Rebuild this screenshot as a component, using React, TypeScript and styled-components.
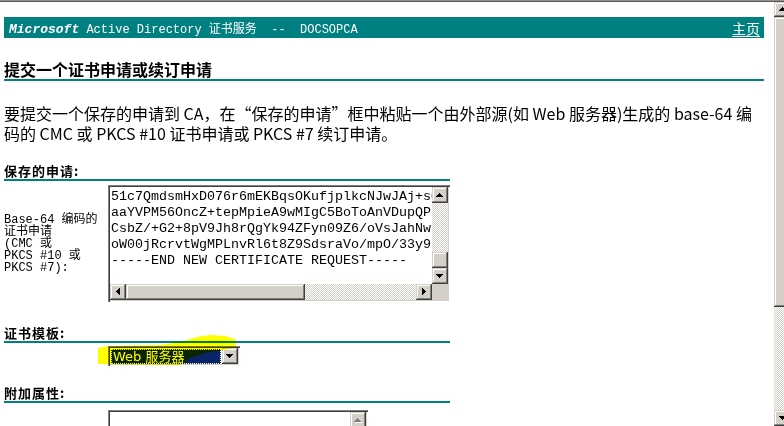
import React from "react";
import styled, { createGlobalStyle, css } from "styled-components";

const TEAL = "#008080";
const FACE = "#d4d0c8";
const CJK = `"Noto Sans CJK SC", sans-serif`;
const MONO = `"Liberation Mono", "Noto Sans CJK SC", monospace`;

const GlobalStyle = createGlobalStyle`
  html, body { margin: 0; padding: 0; background: #fff; overflow: hidden; }
  #root { width: 784px; height: 426px; }
`;

const bevel = css`
  background: ${FACE};
  box-shadow: inset -1px -1px #404040, inset 1px 1px ${FACE},
    inset -2px -2px #808080, inset 2px 2px #fff;
`;

const sunken = css`
  box-sizing: border-box;
  padding: 2px;
  background: #fff;
  box-shadow: inset 1px 1px #808080, inset 2px 2px #404040,
    inset -1px -1px #fff, inset -2px -2px ${FACE};
`;

const Frame = styled.div`
  width: 784px;
  height: 426px;
  display: flex;
  flex-direction: column;
  overflow: hidden;
`;

const TopEdge = styled.div`
  flex: none;
  height: 0;
  border-top: 1px solid #909090;
  border-bottom: 1px solid #5c5c5c;
`;

const Viewport = styled.div`
  flex: 1;
  min-height: 0;
  display: flex;
`;

const Page = styled.div`
  flex: 1;
  min-width: 0;
  padding: 15px 10px 0 4px;
  overflow: hidden;
`;

const WinScroll = styled.div`
  flex: none;
  width: 10px;
  overflow: hidden;
  display: flex;
  flex-direction: column;
  align-items: flex-start;
`;

const ScrollButton = styled.div<{ $w?: number; $h?: number }>`
  ${bevel};
  flex: none;
  box-sizing: border-box;
  width: ${(p) => p.$w ?? 16}px;
  height: ${(p) => p.$h ?? 16}px;
  display: flex;
  align-items: center;
  justify-content: center;
`;

const Thumb = styled.div<{ $w?: number; $h?: number }>`
  ${bevel};
  flex: none;
  width: ${(p) => (p.$w ? `${p.$w}px` : "16px")};
  height: ${(p) => (p.$h ? `${p.$h}px` : "16px")};
`;

const Track = styled.div<{ $w?: number }>`
  flex: 1;
  ${(p) => (p.$w ? `width: ${p.$w}px;` : "")}
  background: repeating-conic-gradient(#fff 0 25%, ${FACE} 0 50%) 0 0 / 2px 2px;
`;

const Banner = styled.div`
  display: flex;
  align-items: center;
  justify-content: space-between;
  height: 21px;
  background: ${TEAL};
  padding: 0 4px 0 5px;
  color: #fff;
`;

const BannerTitle = styled.span`
  font-family: ${MONO};
  font-size: 12px;
  white-space: pre;
`;

const Brand = styled.span`
  font-family: "Liberation Mono", monospace;
  font-size: 13px;
  font-weight: 700;
  font-style: italic;
`;

const HomeLink = styled.a`
  font-family: ${CJK};
  font-size: 14px;
  color: #fff;
  text-decoration: underline;
  text-underline-offset: 2px;
`;

const Title = styled.h1`
  margin: 21px 0 0;
  font-family: ${CJK};
  font-size: 16px;
  font-weight: 700;
  line-height: 20px;
  color: #000;
  border-bottom: 2px solid ${TEAL};
`;

const Intro = styled.p`
  margin: 22px 0 0;
  font-family: ${CJK};
  font-size: 16px;
  line-height: 20px;
  color: #000;
  white-space: nowrap;
`;

const Section = styled.div`
  width: 446px;
`;

const SectionTitle = styled.h2<{ $top: number }>`
  margin: ${(p) => p.$top}px 0 0;
  font-family: ${CJK};
  font-size: 13px;
  font-weight: 700;
  letter-spacing: 1px;
  line-height: 16px;
  color: #000;
  border-bottom: 2px solid ${TEAL};
`;

const FieldRow = styled.div<{ $top: number }>`
  margin-top: ${(p) => p.$top}px;
  display: grid;
  grid-template-columns: 104px auto;
  align-items: center;
`;

const FieldLabel = styled.div`
  font-family: ${MONO};
  font-size: 12px;
  line-height: 12px;
  color: #000;
`;

const TextBox = styled.div<{ $w: number; $h: number; $hscroll?: boolean }>`
  ${sunken};
  width: ${(p) => p.$w}px;
  height: ${(p) => p.$h}px;
  display: grid;
  grid-template-columns: 1fr 16px;
  grid-template-rows: ${(p) => (p.$hscroll ? "1fr 16px" : "1fr")};
  overflow: hidden;
`;

const BoxText = styled.div`
  padding: 2px 0 0 1px;
  font-family: "Liberation Mono", monospace;
  font-size: 13.33px;
  line-height: 16px;
  color: #000;
  white-space: pre;
  overflow: hidden;
`;

const VScroll = styled.div`
  display: flex;
  flex-direction: column;
  min-height: 0;
`;

const HScroll = styled.div`
  display: flex;
`;

const Corner = styled.div`
  background: ${FACE};
`;

const SelectWrap = styled.div`
  position: relative;
  width: 132px;
  height: 20px;
`;

const SelectBox = styled.div`
  ${sunken};
  width: 100%;
  height: 100%;
  display: flex;
`;

const SelectValue = styled.div`
  flex: 1;
  box-sizing: border-box;
  margin: 1px 1px 0 1px;
  height: 15px;
  background: #0a246a;
  outline: 1px dotted #fff;
  outline-offset: -1px;
  color: #fff;
  font-family: "DejaVu Sans", "Noto Sans CJK SC", sans-serif;
  font-size: 13px;
  line-height: 15px;
  padding-left: 2px;
  white-space: nowrap;
`;

const Highlight = styled.svg`
  position: absolute;
  left: -10px;
  top: -11px;
  width: 148px;
  height: 32px;
  pointer-events: none;
  mix-blend-mode: multiply;
`;

type Dir = "up" | "down" | "left" | "right";
const ARROWS: Record<Dir, { w: number; h: number; d: string }> = {
  up: { w: 7, h: 4, d: "M3 0h1v1H3z M2 1h3v1H2z M1 2h5v1H1z M0 3h7v1H0z" },
  down: { w: 7, h: 4, d: "M0 0h7v1H0z M1 1h5v1H1z M2 2h3v1H2z M3 3h1v1H3z" },
  left: { w: 4, h: 7, d: "M3 0h1v7H3z M2 1h1v5H2z M1 2h1v3H1z M0 3h1v1H0z" },
  right: { w: 4, h: 7, d: "M0 0h1v7H0z M1 1h1v5H1z M2 2h1v3H2z M3 3h1v1H3z" },
};

function Arrow({ dir, disabled }: { dir: Dir; disabled?: boolean }) {
  const a = ARROWS[dir];
  return (
    <svg width={a.w + 1} height={a.h + 1} viewBox={`0 0 ${a.w + 1} ${a.h + 1}`} shapeRendering="crispEdges">
      {disabled && <path d={a.d} fill="#fff" transform="translate(1 1)" />}
      <path d={a.d} fill={disabled ? "#808080" : "#000"} />
    </svg>
  );
}

const requestLines = [
  "51c7QmdsmHxD076r6mEKBqsOKufjplkcNJwJAj+sQ",
  "aaYVPM56OncZ+tepMpieA9wMIgC5BoToAnVDupQPk",
  "CsbZ/+G2+8pV9Jh8rQgYk94ZFyn09Z6/oVsJahNw2",
  "oW00jRcrvtWgMPLnvRl6t8Z9SdsraVo/mpO/33y9z",
  "-----END NEW CERTIFICATE REQUEST-----",
];

export default function App() {
  return (
    <>
      <GlobalStyle />
      <Frame>
        <TopEdge />
        <Viewport>
          <Page>
            <Banner>
              <BannerTitle>
                <Brand>Microsoft</Brand> Active Directory 证书服务  --  DOCSOPCA
              </BannerTitle>
              <HomeLink href="#">主页</HomeLink>
            </Banner>

            <Title>提交一个证书申请或续订申请</Title>

            <Intro>
              要提交一个保存的申请到 CA，在“保存的申请”框中粘贴一个由外部源(如 Web 服务器)生成的 base-64 编
              <br />
              码的 CMC 或 PKCS #10 证书申请或 PKCS #7 续订申请。
            </Intro>

            <Section>
              <SectionTitle $top={20}>保存的申请:</SectionTitle>
              <FieldRow $top={4}>
                <FieldLabel>
                  Base-64 编码的
                  <br />
                  证书申请
                  <br />
                  (CMC 或
                  <br />
                  PKCS #10 或
                  <br />
                  PKCS #7):
                </FieldLabel>
                <TextBox $w={342} $h={117} $hscroll>
                  <BoxText>{requestLines.join("\n")}</BoxText>
                  <VScroll>
                    <ScrollButton>
                      <Arrow dir="up" />
                    </ScrollButton>
                    <Track />
                    <Thumb />
                    <ScrollButton>
                      <Arrow dir="down" />
                    </ScrollButton>
                  </VScroll>
                  <HScroll>
                    <ScrollButton>
                      <Arrow dir="left" />
                    </ScrollButton>
                    <Thumb $w={179} />
                    <Track />
                    <ScrollButton>
                      <Arrow dir="right" />
                    </ScrollButton>
                  </HScroll>
                  <Corner />
                </TextBox>
              </FieldRow>

              <SectionTitle $top={23}>证书模板:</SectionTitle>
              <FieldRow $top={3}>
                <span />
                <SelectWrap>
                  <SelectBox>
                    <SelectValue>Web 服务器</SelectValue>
                    <ScrollButton>
                      <Arrow dir="down" />
                    </ScrollButton>
                  </SelectBox>
                  <Highlight viewBox="98 335 148 32">
                    <path
                      d="M98 348 L108 346 L160 345 L180 342 L197 337 L210 335 L225 336 L235 339 L236 347 L223 350 L205 353 L190 358 L180 365 L98 364 Z"
                      fill="#ffff00"
                    />
                  </Highlight>
                </SelectWrap>
              </FieldRow>

              <SectionTitle $top={19}>附加属性:</SectionTitle>
              <FieldRow $top={7}>
                <span />
                <TextBox $w={260} $h={60}>
                  <BoxText />
                  <VScroll>
                    <ScrollButton>
                      <Arrow dir="up" disabled />
                    </ScrollButton>
                    <Track />
                  </VScroll>
                </TextBox>
              </FieldRow>
            </Section>
          </Page>

          <WinScroll>
            <ScrollButton $w={17} $h={15}>
              <Arrow dir="up" />
            </ScrollButton>
            <Thumb $w={17} $h={290} />
            <Track $w={17} />
            <ScrollButton $w={17} $h={16}>
              <Arrow dir="down" />
            </ScrollButton>
          </WinScroll>
        </Viewport>
      </Frame>
    </>
  );
}
